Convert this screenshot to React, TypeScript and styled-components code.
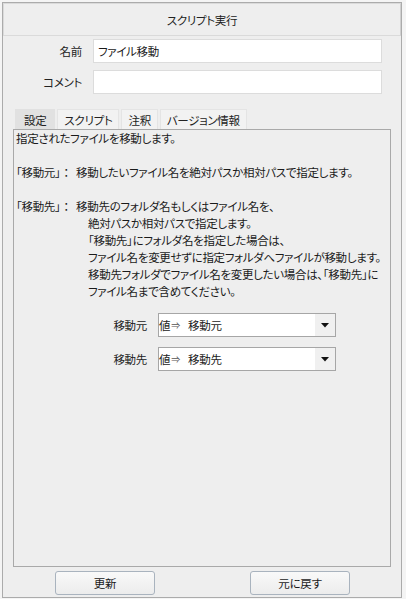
import React from "react";
import styled, { createGlobalStyle } from "styled-components";

const GlobalStyle = createGlobalStyle`
  html, body { margin: 0; padding: 0; background: #f4f4f4; }
  body {
    font-family: "Noto Sans CJK JP", "Noto Sans", sans-serif;
    font-size: 11.5px;
    letter-spacing: -0.3px;
    color: #1a1a1a;
    font-feature-settings: "palt";
  }
`;

const Window = styled.div`
  box-sizing: border-box;
  margin: 2px 0 0 2px;
  width: 400px;
  height: 596px;
  border: 1px solid #ababab;
  background: #eeeeee;
  display: flex;
  flex-direction: column;
`;

const TitleBar = styled.div`
  box-sizing: border-box;
  height: 33px;
  border: 1px solid #dadada;
  border-right-color: #d0d0d0;
  display: flex;
  align-items: center;
  justify-content: center;
  color: #222;
`;

const Form = styled.div`
  display: grid;
  grid-template-columns: 79px 289px;
  column-gap: 11px;
  row-gap: 7px;
  padding-top: 3px;
  align-items: center;
`;

const Label = styled.div`
  text-align: right;
  color: #222;
`;

const TextInput = styled.div`
  box-sizing: border-box;
  height: 24px;
  border: 1px solid #dcdcdc;
  background: #ffffff;
  display: flex;
  align-items: center;
  padding-left: 4px;
  color: #1a1a1a;
`;

const TabBar = styled.div`
  display: flex;
  gap: 2px;
  margin: 15px 0 0 12px;
  height: 20px;
`;

const Tab = styled.div<{ $active?: boolean }>`
  box-sizing: border-box;
  height: 20px;
  padding: 0 ${(p) => (p.$active ? "8px" : "6px")};
  display: flex;
  align-items: center;
  background: ${(p) => (p.$active ? "#e1e1e1" : "#f2f2f2")};
  border: 1px solid ${(p) => (p.$active ? "#e1e1e1" : "#e4e4e4")};
  border-bottom: none;
  color: #222;
`;

const Panel = styled.div`
  box-sizing: border-box;
  margin-left: 10px;
  width: 378px;
  height: 438px;
  border: 1px solid #a9a9a9;
  padding: 0 0 0 2px;
  background: #eeeeee;
`;

const Line = styled.div<{ $indent?: number }>`
  height: 17px;
  line-height: 17px;
  padding-left: ${(p) => p.$indent ?? 0}px;
  white-space: nowrap;
  color: #1a1a1a;
`;

const Term = styled.span`
  display: inline-block;
  width: 60px;
`;

const Colon = styled.span`
  font-feature-settings: normal;
  letter-spacing: 0;
`;

const Selects = styled.div`
  display: grid;
  grid-template-columns: 50px 178px;
  column-gap: 11px;
  row-gap: 10px;
  margin: 13px 0 0 81px;
  align-items: center;
`;

const SelectLabel = styled.div`
  text-align: right;
  color: #222;
`;

const Select = styled.div`
  box-sizing: border-box;
  height: 24px;
  border: 1px solid #a6a6a6;
  background: #ffffff;
  display: flex;
  align-items: stretch;
`;

const SelectValue = styled.div`
  flex: 1;
  display: flex;
  align-items: center;
`;

const ValueTag = styled.span`
  display: inline-flex;
  align-items: center;
  width: 29px;
  color: #222;
`;

const Arrow = styled.span`
  font-size: 9px;
  margin-left: 1px;
  color: #555;
`;

const ArrowBox = styled.div`
  width: 20px;
  background: #f0f0f0;
  display: flex;
  align-items: center;
  justify-content: center;
`;

const Buttons = styled.div`
  display: flex;
  gap: 95px;
  padding: 4px 0 0 52px;
`;

const Button = styled.div`
  box-sizing: border-box;
  width: 100px;
  height: 24px;
  border: 1px solid #a9b3be;
  border-radius: 3px;
  background: linear-gradient(#f9f9f9, #ececec);
  display: flex;
  align-items: center;
  justify-content: center;
  color: #1a1a1a;
`;

const Caret = () => (
  <svg width="8" height="5" viewBox="0 0 8 5">
    <path d="M0 0 H8 L4 4.5 Z" fill="#111" />
  </svg>
);

const DropDown = ({ value }: { value: string }) => (
  <Select>
    <SelectValue>
      <ValueTag>
        値<Arrow>⇒</Arrow>
      </ValueTag>
      {value}
    </SelectValue>
    <ArrowBox>
      <Caret />
    </ArrowBox>
  </Select>
);

export default function App() {
  return (
    <>
      <GlobalStyle />
      <Window>
        <TitleBar>スクリプト実行</TitleBar>
        <Form>
          <Label>名前</Label>
          <TextInput>ファイル移動</TextInput>
          <Label>コメント</Label>
          <TextInput />
        </Form>
        <TabBar>
          <Tab $active>設定</Tab>
          <Tab>スクリプト</Tab>
          <Tab>注釈</Tab>
          <Tab>バージョン情報</Tab>
        </TabBar>
        <Panel>
          <Line>指定されたファイルを移動します。</Line>
          <Line />
          <Line>
            <Term>
              「移動元」<Colon>：</Colon>
            </Term>
            移動したいファイル名を絶対パスか相対パスで指定します。
          </Line>
          <Line />
          <Line>
            <Term>
              「移動先」<Colon>：</Colon>
            </Term>
            移動先のフォルダ名もしくはファイル名を、
          </Line>
          <Line $indent={72}>絶対パスか相対パスで指定します。</Line>
          <Line $indent={72}>「移動先」にフォルダ名を指定した場合は、</Line>
          <Line $indent={72}>ファイル名を変更せずに指定フォルダへファイルが移動します。</Line>
          <Line $indent={72}>移動先フォルダでファイル名を変更したい場合は、「移動先」に</Line>
          <Line $indent={72}>ファイル名まで含めてください。</Line>
          <Selects>
            <SelectLabel>移動元</SelectLabel>
            <DropDown value="移動元" />
            <SelectLabel>移動先</SelectLabel>
            <DropDown value="移動先" />
          </Selects>
        </Panel>
        <Buttons>
          <Button>更新</Button>
          <Button>元に戻す</Button>
        </Buttons>
      </Window>
    </>
  );
}
